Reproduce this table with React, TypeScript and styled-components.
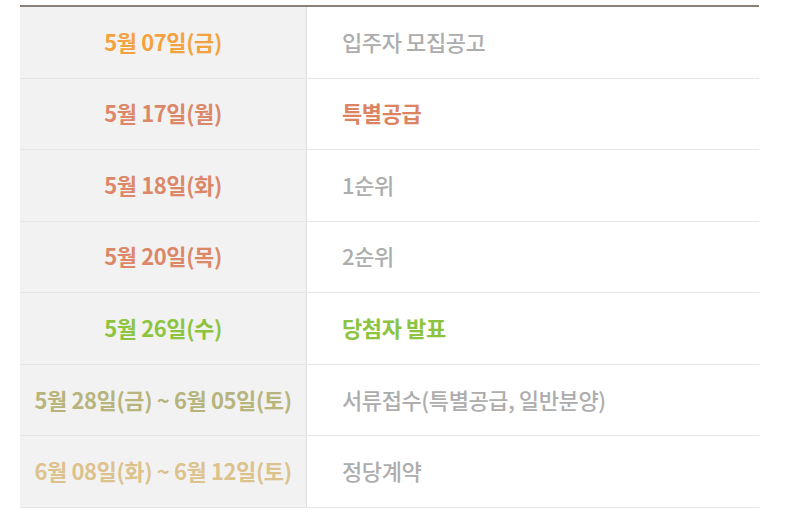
import React from "react";
import styled, { createGlobalStyle } from "styled-components";

const Global = createGlobalStyle`
  html, body { margin: 0; padding: 0; background: #ffffff; }
  body { font-family: "Noto Sans CJK KR", "Noto Sans", sans-serif; }
`;

const Page = styled.div`
  padding: 5px 41px 0 20px;
`;

const Table = styled.div`
  border-top: 2px solid #8c8178;
  display: flex;
  flex-direction: column;
`;

const Row = styled.div`
  display: grid;
  grid-template-columns: 287px 1fr;
  height: 71.57px;
  box-sizing: border-box;
  border-bottom: 1px solid #e6e6e6;
`;

const DateCell = styled.div<{ $color: string }>`
  background: #f2f2f2;
  border-right: 1px solid #dedede;
  display: flex;
  align-items: center;
  justify-content: center;
  padding-bottom: 3px;
  color: ${(p) => p.$color};
  font-size: 22px;
  font-weight: 700;
  letter-spacing: -0.4px;
`;

const EventCell = styled.div<{ $color: string; $bold: boolean }>`
  display: flex;
  align-items: center;
  padding: 0 0 3px 35px;
  color: ${(p) => p.$color};
  font-size: 22px;
  font-weight: ${(p) => (p.$bold ? 700 : 500)};
  letter-spacing: -0.4px;
`;

const rows = [
  { date: "5월 07일(금)", dc: "#f4a23f", ev: "입주자 모집공고", ec: "#adadad", b: false },
  { date: "5월 17일(월)", dc: "#dc8767", ev: "특별공급", ec: "#dc8362", b: true },
  { date: "5월 18일(화)", dc: "#dc8767", ev: "1순위", ec: "#adadad", b: false },
  { date: "5월 20일(목)", dc: "#dc8767", ev: "2순위", ec: "#adadad", b: false },
  { date: "5월 26일(수)", dc: "#8dc43f", ev: "당첨자 발표", ec: "#8dc43f", b: true },
  { date: "5월 28일(금) ~ 6월 05일(토)", dc: "#b7b47c", ev: "서류접수(특별공급, 일반분양)", ec: "#adadad", b: false },
  { date: "6월 08일(화) ~ 6월 12일(토)", dc: "#dcc28d", ev: "정당계약", ec: "#adadad", b: false },
];

export default function App() {
  return (
    <>
      <Global />
      <Page>
        <Table>
          {rows.map((r) => (
            <Row key={r.date}>
              <DateCell $color={r.dc}>{r.date}</DateCell>
              <EventCell $color={r.ec} $bold={r.b}>{r.ev}</EventCell>
            </Row>
          ))}
        </Table>
      </Page>
    </>
  );
}
